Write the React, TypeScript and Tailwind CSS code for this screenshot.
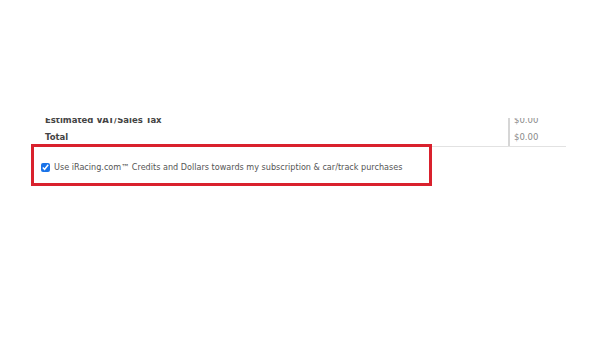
export default function App() {
  const font = { fontFamily: '"DejaVu Sans", Verdana, sans-serif' };
  return (
    <div className="w-[600px] h-[338px] bg-white overflow-hidden" style={font}>
      <div className="pt-[118px]">
        {/* order summary tail, scrolled so the first row is clipped */}
        <div className="ml-[40px] w-[526px] h-[29px] overflow-hidden border-b border-[#e2e2e2]">
          <div className="flex -mt-[6px]">
            <div className="w-[468px] pl-[5px] text-[8.5px] leading-[17px] font-bold text-[#444]">
              <div>Estimated VAT/Sales Tax</div>
              <div>Total</div>
            </div>
            <div className="flex-1 border-l-2 border-[#d6d6d6] pl-[4px] text-[8.5px] leading-[17px] text-[#8a8a8a]">
              <div>$0.00</div>
              <div>$0.00</div>
            </div>
          </div>
        </div>

        {/* highlighted credits option */}
        <div className="relative ml-[31px] -mt-[3px] w-[401px] h-[42px] border-[3px] border-[#d9212d] bg-white flex items-center pl-[7px] pt-[4px]">
          <input
            type="checkbox"
            defaultChecked
            className="m-0 w-[9px] h-[9px] accent-[#1a73e8]"
          />
          <span className="ml-[4px] text-[8.1px] text-[#555]">
            Use iRacing.com™ Credits and Dollars towards my subscription &amp; car/track purchases
          </span>
        </div>
      </div>
    </div>
  );
}
